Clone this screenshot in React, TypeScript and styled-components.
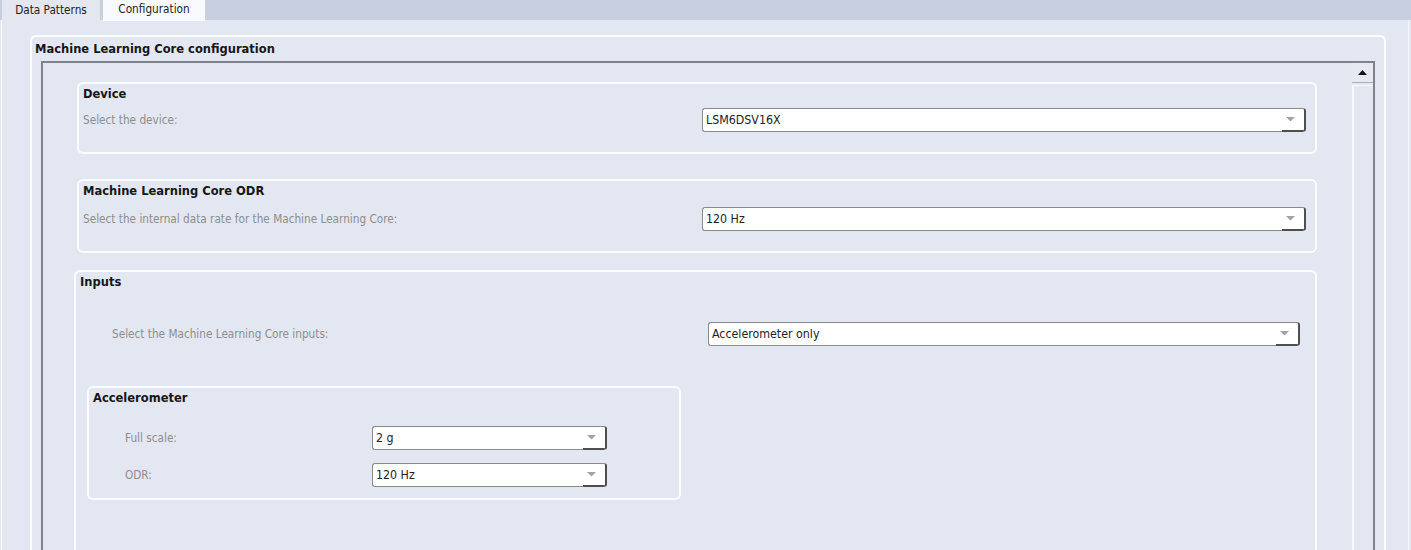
import React from 'react'
import styled, { createGlobalStyle } from 'styled-components'

const GlobalStyle = createGlobalStyle`
    html, body {
        margin: 0;
        padding: 0;
        width: 1411px;
        height: 550px;
        overflow: hidden;
        background: #e3e7f1;
    }
    body {
        font-family: 'DejaVu Sans Condensed', 'DejaVu Sans', 'Liberation Sans', sans-serif;
        font-size: 11.7px;
        color: #1d1d1d;
    }
`

const TabBar = styled.div`
    display: flex;
    align-items: flex-start;
    height: 20px;
    padding-left: 2px;
    gap: 3px;
    background: #c7cfe1;
`

const Tab = styled.div<{ $active?: boolean }>`
    width: ${(p) => (p.$active ? '102px' : '98px')};
    height: ${(p) => (p.$active ? '21px' : '20px')};
    line-height: ${(p) => (p.$active ? '18px' : '21px')};
    text-align: center;
    background: ${(p) => (p.$active ? '#f9fafd' : '#e4e7ef')};
    color: #222;
    position: relative;
    z-index: 1;
`

const Page = styled.div`
    margin: 0 2px 0 1px;
    border-left: 1px solid #ffffff;
    border-right: 1px solid #f3f5f9;
    padding: 15px 22px 0 28px;
    height: 600px;
`

const OuterGroup = styled.div`
    border: 2px solid #fbfcfe;
    border-radius: 6px;
    height: 600px;
`

const GroupTitle = styled.div<{ $indent?: number; $height?: number }>`
    font-family: 'DejaVu Sans', 'Liberation Sans', sans-serif;
    font-size: 11.5px;
    font-weight: bold;
    height: ${(p) => p.$height ?? 20}px;
    line-height: ${(p) => p.$height ?? 20}px;
    padding-left: ${(p) => p.$indent ?? 4}px;
    color: #161616;
    white-space: nowrap;
`

const ScrollPanel = styled.div`
    display: flex;
    margin: 0 9px;
    border: 2px solid #7d828c;
    border-bottom: none;
    height: 600px;
`

const Content = styled.div`
    flex: 1;
    padding: 19px 35px 0 34px;
`

const Group = styled.div<{ $top?: number; $left?: number; $height: number; $width?: number }>`
    border: 2px solid #fbfcfe;
    border-radius: 6px;
    margin-top: ${(p) => p.$top ?? 0}px;
    margin-left: ${(p) => p.$left ?? 0}px;
    height: ${(p) => p.$height - 4}px;
    width: ${(p) => (p.$width ? `${p.$width - 4}px` : 'auto')};
`

const Row = styled.div<{ $top: number; $indent: number; $label: number }>`
    display: grid;
    grid-template-columns: ${(p) => p.$label}px auto;
    align-items: center;
    margin-top: ${(p) => p.$top}px;
    padding-left: ${(p) => p.$indent}px;
`

const Label = styled.div`
    color: #8d8d8d;
    white-space: nowrap;
`

const Combo = styled.div<{ $width: number }>`
    display: flex;
    width: ${(p) => p.$width}px;
    height: 24px;
    box-sizing: border-box;
    background: #ffffff;
    border: 1px solid #8a8a8a;
    border-right: 2px solid #4f4f4f;
    border-radius: 3px;
`

const ComboText = styled.div`
    flex: 1;
    font-size: 12.3px;
    line-height: 22px;
    padding-left: 3px;
    color: #222;
    white-space: nowrap;
`

const ComboArrow = styled.div`
    width: 22px;
    box-sizing: border-box;
    padding-right: 5px;
    display: flex;
    align-items: center;
    justify-content: center;
    border-bottom: 2px solid #4f4f4f;
    margin-bottom: -1px;
    border-bottom-right-radius: 2px;
`

const Scrollbar = styled.div`
    width: 21px;
    display: flex;
    flex-direction: column;
`

const ScrollUp = styled.div`
    height: 19px;
    display: flex;
    align-items: center;
    justify-content: center;
    border-bottom: 1px solid #a9adb6;
    background: #e6e9f2;
`

const ScrollThumb = styled.div`
    flex: 1;
    margin-top: 2px;
    border-left: 2px solid #f7f8fb;
    border-top: 1px solid #f7f8fb;
`

const Arrow = () => (
    <svg width="9" height="5" viewBox="0 0 9 5">
        <path d="M0 0 H9 L4.5 4.5 Z" fill="#a3a3a3" />
    </svg>
)

const UpArrow = () => (
    <svg width="9" height="5" viewBox="0 0 9 5">
        <path d="M0 5 H9 L4.5 0 Z" fill="#111" />
    </svg>
)

const Dropdown = ({ value, width }: { value: string; width: number }) => (
    <Combo $width={width}>
        <ComboText>{value}</ComboText>
        <ComboArrow>
            <Arrow />
        </ComboArrow>
    </Combo>
)

const App = () => {
    return (
        <>
            <GlobalStyle />
            <TabBar>
                <Tab>Data Patterns</Tab>
                <Tab $active>Configuration</Tab>
            </TabBar>
            <Page>
                <OuterGroup>
                    <GroupTitle $height={24} $indent={3}>
                        Machine Learning Core configuration
                    </GroupTitle>
                    <ScrollPanel>
                        <Content>
                            <Group $height={72}>
                                <GroupTitle>Device</GroupTitle>
                                <Row $top={4} $indent={4} $label={619}>
                                    <Label>Select the device:</Label>
                                    <Dropdown value="LSM6DSV16X" width={604} />
                                </Row>
                            </Group>
                            <Group $top={25} $height={74}>
                                <GroupTitle>Machine Learning Core ODR</GroupTitle>
                                <Row $top={6} $indent={4} $label={619}>
                                    <Label>Select the internal data rate for the Machine Learning Core:</Label>
                                    <Dropdown value="120 Hz" width={604} />
                                </Row>
                            </Group>
                            <Group $top={17} $left={-3} $height={400}>
                                <GroupTitle>Inputs</GroupTitle>
                                <Row $top={30} $indent={36} $label={596}>
                                    <Label>Select the Machine Learning Core inputs:</Label>
                                    <Dropdown value="Accelerometer only" width={592} />
                                </Row>
                                <Group $top={40} $left={11} $height={114} $width={594}>
                                    <GroupTitle>Accelerometer</GroupTitle>
                                    <Row $top={18} $indent={36} $label={247}>
                                        <Label>Full scale:</Label>
                                        <Dropdown value="2 g" width={235} />
                                    </Row>
                                    <Row $top={13} $indent={36} $label={247}>
                                        <Label>ODR:</Label>
                                        <Dropdown value="120 Hz" width={235} />
                                    </Row>
                                </Group>
                            </Group>
                        </Content>
                        <Scrollbar>
                            <ScrollUp>
                                <UpArrow />
                            </ScrollUp>
                            <ScrollThumb />
                        </Scrollbar>
                    </ScrollPanel>
                </OuterGroup>
            </Page>
        </>
    )
}

export default App
